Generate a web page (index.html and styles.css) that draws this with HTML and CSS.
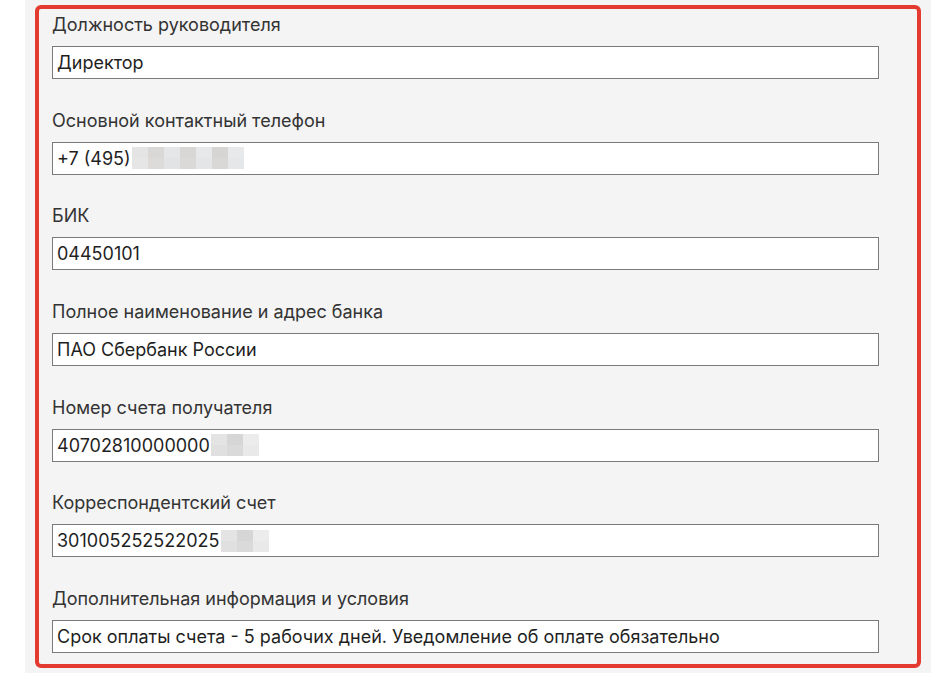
FILE: index.html
```html
<!DOCTYPE html>
<html lang="ru">
<head>
<meta charset="utf-8">
<title>Реквизиты</title>
<link rel="stylesheet" href="styles.css">
</head>
<body>
<div class="panel">
  <div class="frame">
    <div class="group">
      <div class="label">Должность руководителя</div>
      <div class="input">Директор</div>
    </div>
    <div class="group">
      <div class="label">Основной контактный телефон</div>
      <div class="input">+7 (495)<span class="mosaic m-phone"><i></i><i></i><i></i><i></i><i></i><i></i><i></i><i></i><i></i><i></i><i></i><i></i><i></i><i></i></span></div>
    </div>
    <div class="group">
      <div class="label">БИК</div>
      <div class="input">04450101</div>
    </div>
    <div class="group">
      <div class="label">Полное наименование и адрес банка</div>
      <div class="input">ПАО Сбербанк России</div>
    </div>
    <div class="group">
      <div class="label">Номер счета получателя</div>
      <div class="input">40702810000000<span class="mosaic m-acc"><i></i><i></i><i></i><i></i><i></i><i></i></span></div>
    </div>
    <div class="group">
      <div class="label">Корреспондентский счет</div>
      <div class="input">301005252522025<span class="mosaic m-acc"><i></i><i></i><i></i><i></i><i></i><i></i></span></div>
    </div>
    <div class="group">
      <div class="label">Дополнительная информация и условия</div>
      <div class="input">Срок оплаты счета - 5 рабочих дней. Уведомление об оплате обязательно</div>
    </div>
  </div>
</div>
</body>
</html>
```
FILE: styles.css
```css
html, body {
  margin: 0;
  padding: 0;
  background: #ffffff;
  height: 100%;
}
body {
  font-family: "Inter", "Noto Sans", sans-serif;
  color: #2b2b2b;
}
.panel {
  margin-left: 25px;
  background: #f4f4f4;
  min-height: 100%;
  padding: 5px 10px 5px 10px;
  box-sizing: border-box;
}
.frame {
  border: 4px solid #e43b30;
  border-radius: 6px;
  padding: 5px 38px 11px 13px;
  display: flex;
  flex-direction: column;
  gap: 30.67px;
  width: 886px;
  box-sizing: border-box;
}
.group {
  display: flex;
  flex-direction: column;
  gap: 10px;
}
.label {
  font-size: 18px;
  line-height: 22px;
  color: #333333;
}
.input {
  height: 33px;
  box-sizing: border-box;
  border: 1px solid #7a7a7a;
  background: #ffffff;
  padding: 0 4px;
  font-size: 18px;
  line-height: 31px;
  color: #1f1f1f;
  display: flex;
  align-items: center;
  white-space: nowrap;
}
.mosaic {
  display: inline-grid;
  grid-auto-flow: column;
  grid-template-rows: 11px 11px;
  height: 22px;
  margin-left: 1px;
}
.m-phone { grid-template-columns: repeat(7, 16px); }
.m-acc { grid-template-columns: repeat(3, 16px); }
.mosaic i { display: block; background: #e3e3e3; }
.m-phone i:nth-child(1) { background: #e4e4e4; }
.m-phone i:nth-child(2) { background: #e6e6e6; }
.m-phone i:nth-child(3) { background: #d9d8d6; }
.m-phone i:nth-child(4) { background: #dcdbd9; }
.m-phone i:nth-child(5) { background: #e5e6e7; }
.m-phone i:nth-child(6) { background: #e2e3e4; }
.m-phone i:nth-child(7) { background: #d8d7d5; }
.m-phone i:nth-child(8) { background: #dad9d7; }
.m-phone i:nth-child(9) { background: #e7e8e9; }
.m-phone i:nth-child(10) { background: #e4e5e6; }
.m-phone i:nth-child(11) { background: #d6d5d4; }
.m-phone i:nth-child(12) { background: #d9d8d6; }
.m-phone i:nth-child(13) { background: #e8e9ea; }
.m-phone i:nth-child(14) { background: #e6e7e8; }
.m-acc i:nth-child(1) { background: #e4e4e4; }
.m-acc i:nth-child(2) { background: #e0e0e0; }
.m-acc i:nth-child(3) { background: #d6d6d6; }
.m-acc i:nth-child(4) { background: #dadada; }
.m-acc i:nth-child(5) { background: #ececec; }
.m-acc i:nth-child(6) { background: #e9e9e9; }
```
